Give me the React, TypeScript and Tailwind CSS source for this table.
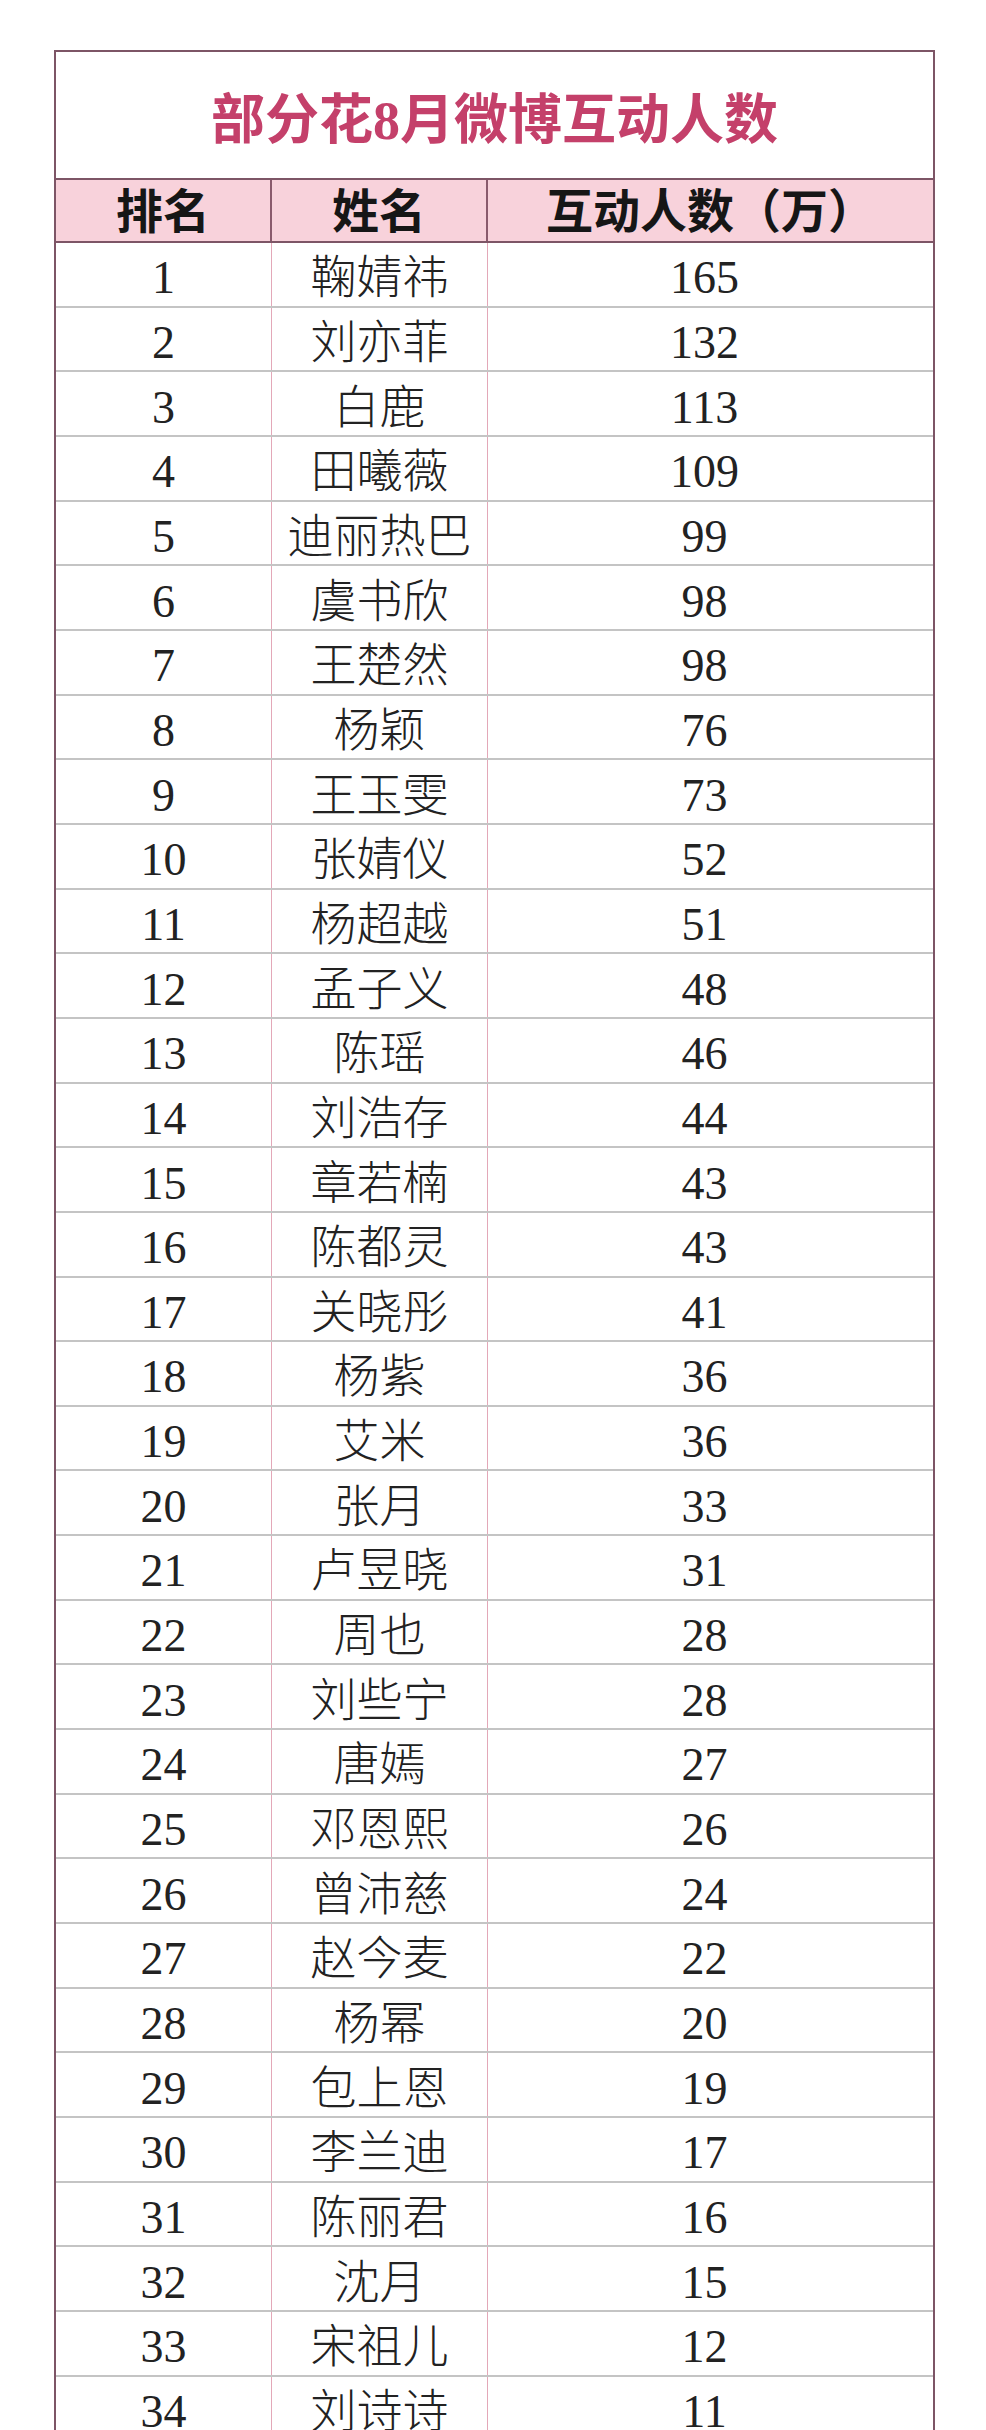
type Row = {
  rank: number;
  name: string;
  count: number;
};

const rows: Row[] = [
  { rank: 1, name: "鞠婧祎", count: 165 },
  { rank: 2, name: "刘亦菲", count: 132 },
  { rank: 3, name: "白鹿", count: 113 },
  { rank: 4, name: "田曦薇", count: 109 },
  { rank: 5, name: "迪丽热巴", count: 99 },
  { rank: 6, name: "虞书欣", count: 98 },
  { rank: 7, name: "王楚然", count: 98 },
  { rank: 8, name: "杨颖", count: 76 },
  { rank: 9, name: "王玉雯", count: 73 },
  { rank: 10, name: "张婧仪", count: 52 },
  { rank: 11, name: "杨超越", count: 51 },
  { rank: 12, name: "孟子义", count: 48 },
  { rank: 13, name: "陈瑶", count: 46 },
  { rank: 14, name: "刘浩存", count: 44 },
  { rank: 15, name: "章若楠", count: 43 },
  { rank: 16, name: "陈都灵", count: 43 },
  { rank: 17, name: "关晓彤", count: 41 },
  { rank: 18, name: "杨紫", count: 36 },
  { rank: 19, name: "艾米", count: 36 },
  { rank: 20, name: "张月", count: 33 },
  { rank: 21, name: "卢昱晓", count: 31 },
  { rank: 22, name: "周也", count: 28 },
  { rank: 23, name: "刘些宁", count: 28 },
  { rank: 24, name: "唐嫣", count: 27 },
  { rank: 25, name: "邓恩熙", count: 26 },
  { rank: 26, name: "曾沛慈", count: 24 },
  { rank: 27, name: "赵今麦", count: 22 },
  { rank: 28, name: "杨幂", count: 20 },
  { rank: 29, name: "包上恩", count: 19 },
  { rank: 30, name: "李兰迪", count: 17 },
  { rank: 31, name: "陈丽君", count: 16 },
  { rank: 32, name: "沈月", count: 15 },
  { rank: 33, name: "宋祖儿", count: 12 },
  { rank: 34, name: "刘诗诗", count: 11 },
];

export default function App() {
  return (
    <div className="h-[2430px] w-[986px] overflow-hidden bg-white font-['Liberation_Serif','Noto_Sans_CJK_SC',serif] text-[#222]">
      <div className="ml-[54px] mt-[50px] w-[881px] border-2 border-[#7d5566]">
        {/* 标题 */}
        <div className="flex h-[126px] items-center justify-center pt-3 text-[54px] font-bold leading-none text-[#c4406a]">
          部分花8月微博互动人数
        </div>

        {/* 表头 */}
        <div className="flex h-[65px] border-y-2 border-[#7d5566] bg-[#f8d2db] text-[47px] font-bold leading-none text-[#161616]">
          <div className="flex w-[216px] items-center justify-center border-r-2 border-[#8a5a6c] pt-1">排名</div>
          <div className="flex w-[216px] items-center justify-center border-r-2 border-[#8a5a6c] pt-1">姓名</div>
          <div className="flex flex-1 items-center justify-center pt-1">互动人数（万）</div>
        </div>

        {/* 数据 */}
        {rows.map((row) => (
          <div key={row.rank} className="flex h-[64.67px] border-b-2 border-[#c4c4c4] text-[46px] font-light leading-none">
            <div className="flex w-[216px] items-center justify-center border-r border-[#e3a8b8] pt-2">{row.rank}</div>
            <div className="flex w-[216px] items-center justify-center border-r border-[#e3a8b8] pt-2">{row.name}</div>
            <div className="flex flex-1 items-center justify-center pt-2 pr-3">{row.count}</div>
          </div>
        ))}
      </div>
    </div>
  );
}
